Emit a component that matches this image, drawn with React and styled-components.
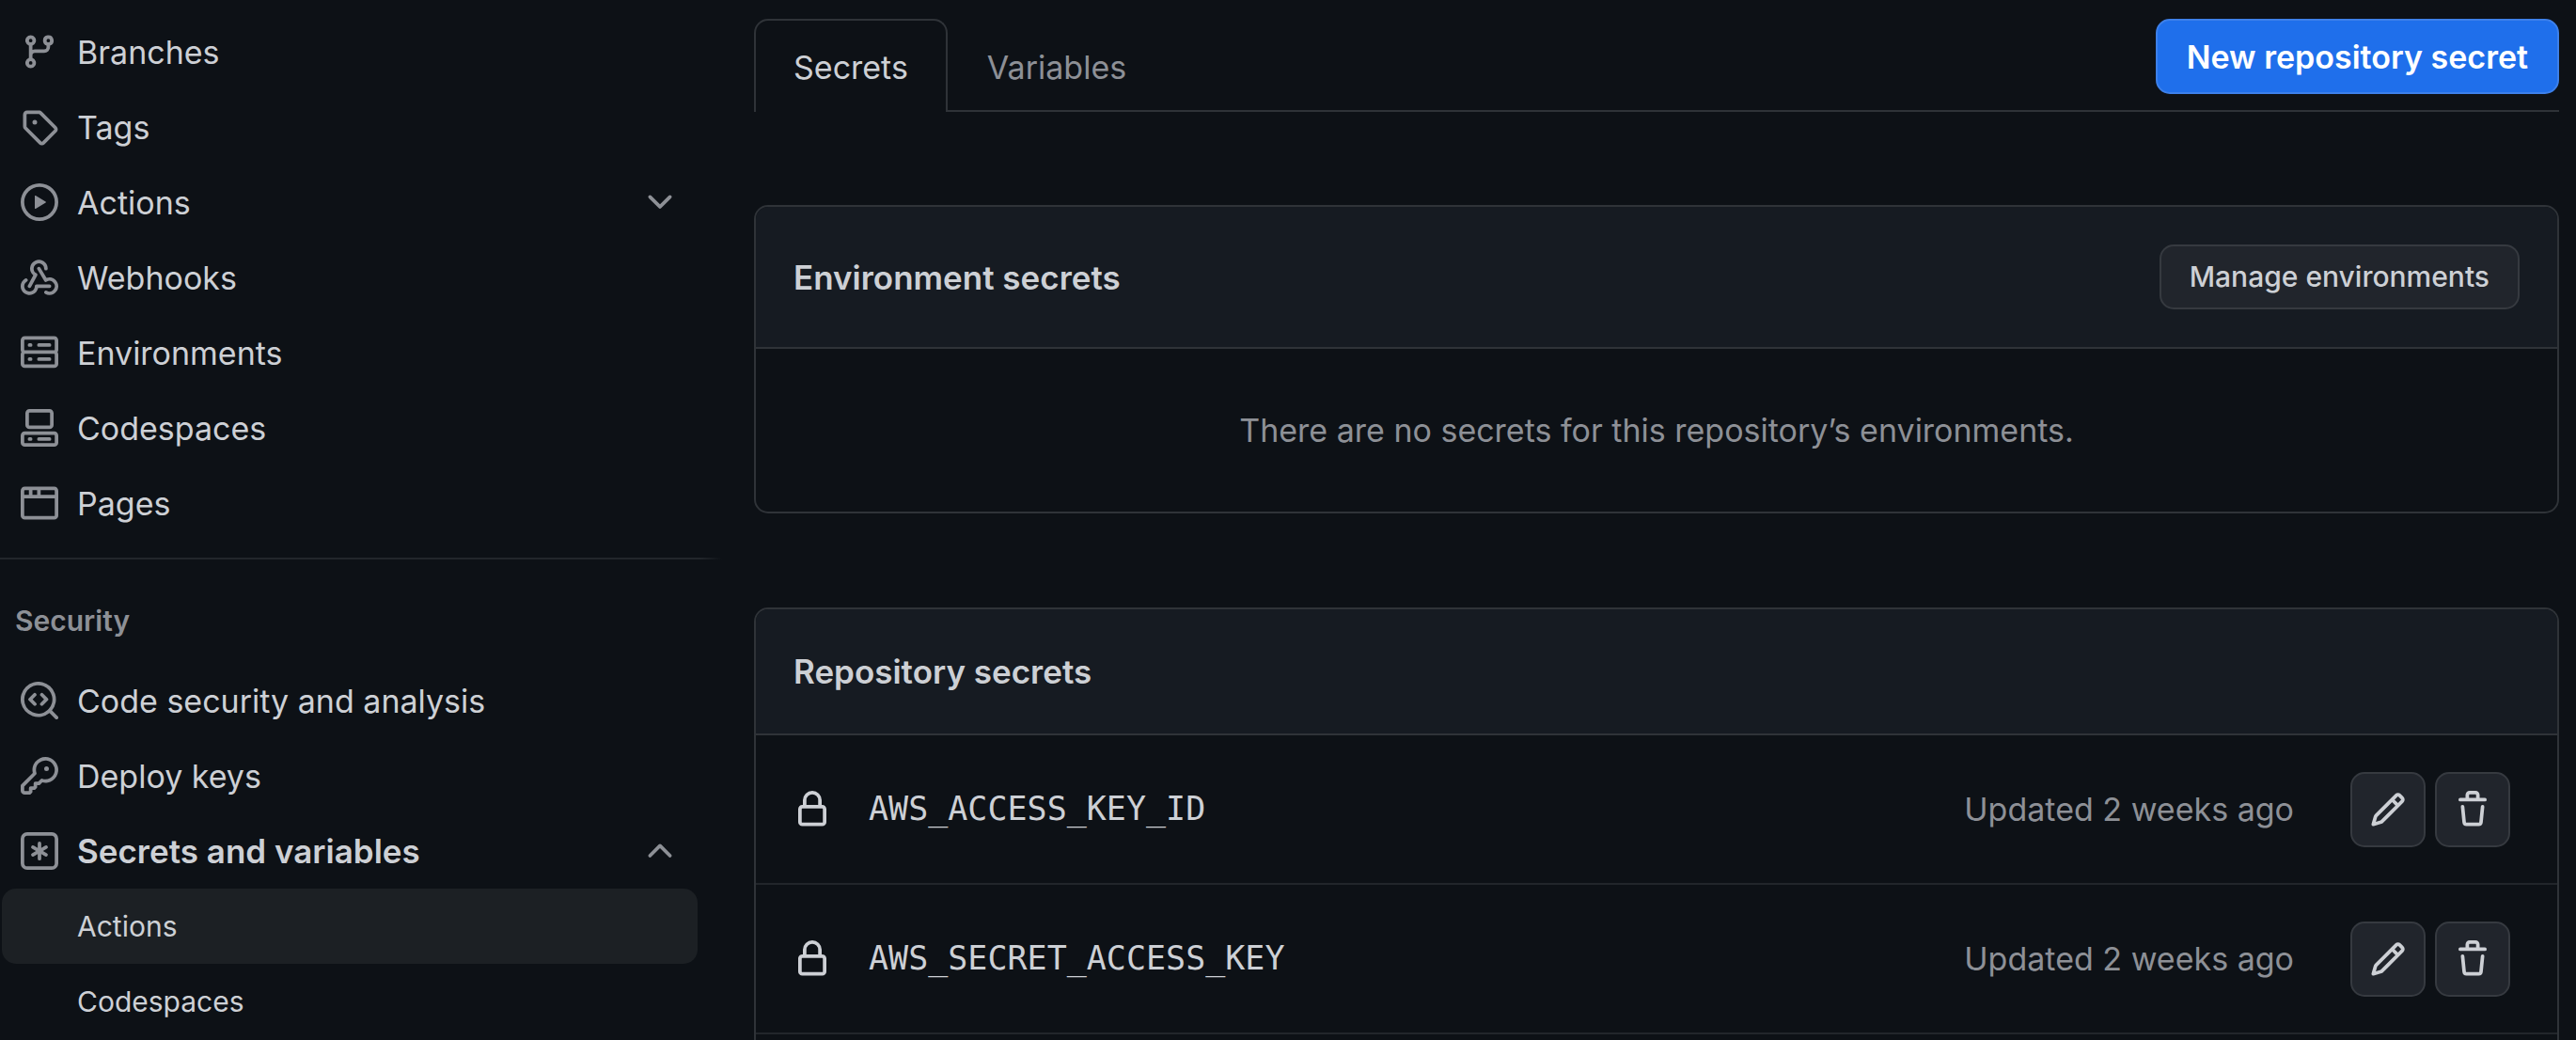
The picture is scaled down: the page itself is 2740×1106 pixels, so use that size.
import React from "react";
import styled, { createGlobalStyle } from "styled-components";

const color = {
  canvas: "#0d1116",
  header: "#161b22",
  text: "#cdd0d5",
  muted: "#8d9096",
  border: "#2f3338",
  rowBorder: "#22262b",
  button: "#21252c",
  buttonBorder: "#363a40",
  selected: "#1c2024",
  accent: "#1f6feb",
  accentBorder: "#3d80ea",
};

const GlobalStyle = createGlobalStyle`
  *, *::before, *::after { box-sizing: border-box; }
  body {
    margin: 0;
    background: ${color.canvas};
    color: ${color.text};
    font-family: Inter, "Liberation Sans", sans-serif;
    font-size: 34px;
    line-height: 47px;
  }
  button { font: inherit; color: inherit; cursor: pointer; }
  a { color: inherit; text-decoration: none; }
  ul { list-style: none; margin: 0; padding: 0; }
  h2, h3 { margin: 0; }
`;

const paths = {
  branch: "M9.5 3.25a2.25 2.25 0 1 1 3 2.122V6A2.5 2.5 0 0 1 10 8.5H6a1 1 0 0 0-1 1v1.128a2.251 2.251 0 1 1-1.5 0V5.372a2.25 2.25 0 1 1 1.5 0v1.836A2.493 2.493 0 0 1 6 7h4a1 1 0 0 0 1-1v-.628A2.25 2.25 0 0 1 9.5 3.25Zm-6 0a.75.75 0 1 0 1.5 0 .75.75 0 0 0-1.5 0Zm8.25-.75a.75.75 0 1 0 0 1.5.75.75 0 0 0 0-1.5ZM4.25 12a.75.75 0 1 0 0 1.5.75.75 0 0 0 0-1.5Z",
  tag: "M1 7.775V2.75C1 1.784 1.784 1 2.75 1h5.025c.464 0 .91.184 1.238.513l6.25 6.25a1.75 1.75 0 0 1 0 2.474l-5.026 5.026a1.75 1.75 0 0 1-2.474 0l-6.25-6.25A1.752 1.752 0 0 1 1 7.775Zm1.5 0c0 .066.026.13.073.177l6.25 6.25a.25.25 0 0 0 .354 0l5.025-5.025a.25.25 0 0 0 0-.354l-6.25-6.25a.25.25 0 0 0-.177-.073H2.75a.25.25 0 0 0-.25.25ZM6 5a1 1 0 1 1 0 2 1 1 0 0 1 0-2Z",
  play: "M8 0a8 8 0 1 1 0 16A8 8 0 0 1 8 0ZM1.5 8a6.5 6.5 0 1 0 13 0 6.5 6.5 0 0 0-13 0Zm4.879-2.773 4.264 2.559a.25.25 0 0 1 0 .428l-4.264 2.559A.25.25 0 0 1 6 10.559V5.442a.25.25 0 0 1 .379-.215Z",
  webhook: "M5.5 4.25a2.25 2.25 0 0 1 4.5 0 .75.75 0 0 0 1.5 0 3.75 3.75 0 1 0-6.14 2.889l-2.272 4.258a.75.75 0 0 0 1.324.706L7 7.25a.75.75 0 0 0-.309-1.015A2.25 2.25 0 0 1 5.5 4.25ZM7.364 3.607a.75.75 0 0 1 1.03.257l2.608 4.349a3.75 3.75 0 1 1-.628 6.785.75.75 0 0 1 .752-1.299 2.25 2.25 0 1 0-.033-3.88.75.75 0 0 1-1.03-.256L7.107 4.636a.75.75 0 0 1 .257-1.03ZM2.9 8.776A.75.75 0 0 1 2.625 9.8 2.25 2.25 0 1 0 6 11.75a.75.75 0 0 1 .75-.751h5.5a.75.75 0 0 1 0 1.5H7.425a3.751 3.751 0 1 1-5.55-3.998.75.75 0 0 1 1.024.274Z",
  server: "M1.75 1h12.5c.966 0 1.75.784 1.75 1.75v4c0 .372-.116.717-.314 1 .198.283.314.628.314 1v4a1.75 1.75 0 0 1-1.75 1.75H1.75A1.75 1.75 0 0 1 0 12.75v-4c0-.358.109-.707.314-1a1.739 1.739 0 0 1-.314-1v-4C0 1.784.784 1 1.75 1ZM1.5 2.75v4c0 .138.112.25.25.25h12.5a.25.25 0 0 0 .25-.25v-4a.25.25 0 0 0-.25-.25H1.75a.25.25 0 0 0-.25.25Zm.25 5.75a.25.25 0 0 0-.25.25v4c0 .138.112.25.25.25h12.5a.25.25 0 0 0 .25-.25v-4a.25.25 0 0 0-.25-.25ZM7 4.75A.75.75 0 0 1 7.75 4h4.5a.75.75 0 0 1 0 1.5h-4.5A.75.75 0 0 1 7 4.75ZM7.75 10h4.5a.75.75 0 0 1 0 1.5h-4.5a.75.75 0 0 1 0-1.5ZM3 4.75A.75.75 0 0 1 3.75 4h.5a.75.75 0 0 1 0 1.5h-.5A.75.75 0 0 1 3 4.75ZM3.75 10h.5a.75.75 0 0 1 0 1.5h-.5a.75.75 0 0 1 0-1.5Z",
  codespaces: "M0 11.25c0-.966.784-1.75 1.75-1.75h12.5c.966 0 1.75.784 1.75 1.75v3A1.75 1.75 0 0 1 14.25 16H1.75A1.75 1.75 0 0 1 0 14.25Zm2-9.5C2 .784 2.784 0 3.75 0h8.5C13.216 0 14 .784 14 1.75v5a1.75 1.75 0 0 1-1.75 1.75h-8.5A1.75 1.75 0 0 1 2 6.75Zm1.75-.25a.25.25 0 0 0-.25.25v5c0 .138.112.25.25.25h8.5a.25.25 0 0 0 .25-.25v-5a.25.25 0 0 0-.25-.25Zm-2 9.5a.25.25 0 0 0-.25.25v3c0 .138.112.25.25.25h12.5a.25.25 0 0 0 .25-.25v-3a.25.25 0 0 0-.25-.25ZM7 12.75a.75.75 0 0 1 .75-.75h4.5a.75.75 0 0 1 0 1.5h-4.5a.75.75 0 0 1-.75-.75Zm-4 0a.75.75 0 0 1 .75-.75h.5a.75.75 0 0 1 0 1.5h-.5a.75.75 0 0 1-.75-.75Z",
  browser: "M0 2.75C0 1.784.784 1 1.75 1h12.5c.966 0 1.75.784 1.75 1.75v10.5A1.75 1.75 0 0 1 14.25 15H1.75A1.75 1.75 0 0 1 0 13.25ZM14.5 6h-13v7.25c0 .138.112.25.25.25h12.5a.25.25 0 0 0 .25-.25Zm-6-3.5v2h6V2.75a.25.25 0 0 0-.25-.25ZM5 2.5v2h2v-2Zm-3.25 0a.25.25 0 0 0-.25.25V4.5h2v-2Z",
  codescan: "M8.47 4.97a.75.75 0 0 0 0 1.06L9.94 7.5 8.47 8.97a.75.75 0 1 0 1.06 1.06l2-2a.75.75 0 0 0 0-1.06l-2-2a.75.75 0 0 0-1.06 0ZM6.53 6.03a.75.75 0 0 0-1.06-1.06l-2 2a.75.75 0 0 0 0 1.06l2 2a.75.75 0 1 0 1.06-1.06L5.06 7.5l1.47-1.47ZM12.246 13.307a7.501 7.501 0 1 1 1.06-1.06l2.474 2.473a.749.749 0 1 1-1.06 1.06ZM1.5 7.5a6.002 6.002 0 0 0 3.608 5.504 6.002 6.002 0 0 0 6.486-1.117.748.748 0 0 1 .292-.293A6 6 0 1 0 1.5 7.5Z",
  key: "M10.5 0a5.499 5.499 0 1 1-1.288 10.848l-.932.932a.749.749 0 0 1-.53.22H7v.75a.749.749 0 0 1-.22.53l-.5.5a.749.749 0 0 1-.53.22H5v.75a.749.749 0 0 1-.22.53l-.5.5a.749.749 0 0 1-.53.22h-2A1.75 1.75 0 0 1 0 14.25v-2c0-.199.079-.389.22-.53l4.932-4.932A5.5 5.5 0 0 1 10.5 0Zm-4 5.5c-.001.431.069.86.205 1.269a.75.75 0 0 1-.181.768L1.5 12.56v1.69c0 .138.112.25.25.25h1.69l.06-.06v-1.19a.75.75 0 0 1 .75-.75h1.19l.06-.06v-1.19a.75.75 0 0 1 .75-.75h1.19l1.023-1.025a.75.75 0 0 1 .768-.18A4 4 0 1 0 6.5 5.5ZM11 6a1 1 0 1 1 0-2 1 1 0 0 1 0 2Z",
  asterisk: "M0 2.75A2.75 2.75 0 0 1 2.75 0h10.5A2.75 2.75 0 0 1 16 2.75v10.5A2.75 2.75 0 0 1 13.25 16H2.75A2.75 2.75 0 0 1 0 13.25ZM2.75 1.5c-.69 0-1.25.56-1.25 1.25v10.5c0 .69.56 1.25 1.25 1.25h10.5c.69 0 1.25-.56 1.25-1.25V2.75c0-.69-.56-1.25-1.25-1.25ZM8 4a.75.75 0 0 1 .75.75V6.7l1.69-.975a.75.75 0 0 1 .75 1.3L9.5 8l1.69.976a.75.75 0 0 1-.75 1.298L8.75 9.3v1.951a.75.75 0 0 1-1.5 0V9.299l-1.69.976a.75.75 0 0 1-.75-1.3L6.5 8l-1.69-.975a.75.75 0 0 1 .75-1.3l1.69.976V4.75A.75.75 0 0 1 8 4Z",
  chevronDown: "M12.78 5.22a.749.749 0 0 1 0 1.06l-4.25 4.25a.749.749 0 0 1-1.06 0L3.22 6.28a.749.749 0 1 1 1.06-1.06L8 8.939l3.72-3.719a.749.749 0 0 1 1.06 0Z",
  chevronUp: "M3.22 10.53a.749.749 0 0 1 0-1.06l4.25-4.25a.749.749 0 0 1 1.06 0l4.25 4.25a.749.749 0 1 1-1.06 1.06L8 6.811 4.28 10.53a.749.749 0 0 1-1.06 0Z",
  lock: "M4 4a4 4 0 0 1 8 0v2h.25c.966 0 1.75.784 1.75 1.75v5.5A1.75 1.75 0 0 1 12.25 15h-8.5A1.75 1.75 0 0 1 2 13.25v-5.5C2 6.784 2.784 6 3.75 6H4Zm8.25 3.5h-8.5a.25.25 0 0 0-.25.25v5.5c0 .138.112.25.25.25h8.5a.25.25 0 0 0 .25-.25v-5.5a.25.25 0 0 0-.25-.25ZM10.5 6V4a2.5 2.5 0 1 0-5 0v2Z",
  pencil: "M11.013 1.427a1.75 1.75 0 0 1 2.474 0l1.086 1.086a1.75 1.75 0 0 1 0 2.474l-8.61 8.61c-.21.21-.47.364-.756.445l-3.251.93a.75.75 0 0 1-.927-.928l.929-3.25c.081-.286.235-.547.445-.758l8.61-8.61Zm.176 4.823L9.75 4.81l-6.286 6.287a.253.253 0 0 0-.064.108l-.558 1.953 1.953-.558a.253.253 0 0 0 .108-.064Zm1.238-3.763a.25.25 0 0 0-.354 0L10.811 3.75l1.439 1.44 1.263-1.263a.25.25 0 0 0 0-.354Z",
  trash: "M11 1.75V3h2.25a.75.75 0 0 1 0 1.5H2.75a.75.75 0 0 1 0-1.5H5V1.75C5 .784 5.784 0 6.75 0h2.5C10.216 0 11 .784 11 1.75ZM4.496 6.675l.66 6.6a.25.25 0 0 0 .249.225h5.19a.25.25 0 0 0 .249-.225l.66-6.6a.75.75 0 0 1 1.492.149l-.66 6.6A1.748 1.748 0 0 1 10.595 15h-5.19a1.75 1.75 0 0 1-1.741-1.575l-.66-6.6a.75.75 0 1 1 1.492-.15ZM6.5 1.75V3h3V1.75a.25.25 0 0 0-.25-.25h-2.5a.25.25 0 0 0-.25.25Z",
};

const Svg = styled.svg`
  flex: none;
  display: block;
  width: 40px;
  height: 40px;
  fill: ${(p) => (p.$strong ? color.text : color.muted)};
`;

const Icon = ({ name, strong }) => (
  <Svg viewBox="0 0 16 16" aria-hidden="true" $strong={strong}>
    <path d={paths[name]} />
  </Svg>
);

const Page = styled.div`
  display: grid;
  grid-template-columns: 768px minmax(0, 1fr);
  column-gap: 34px;
  min-height: 100vh;
  padding-right: 18px;
`;

const Sidebar = styled.nav`
  padding-top: 15px;
`;

const NavList = styled.ul`
  padding: 0 26px 0 2px;
`;

const navItem = `
  display: flex;
  align-items: center;
  width: 100%;
  height: 80px;
  border: 0;
  border-radius: 15px;
`;

const NavLink = styled.a`
  ${navItem}
  gap: 20px;
  padding: 0 20px;
`;

const NavToggle = styled.button`
  ${navItem}
  gap: 20px;
  padding: 0 20px;
  background: none;
  text-align: left;
  font-size: ${(p) => (p.$open ? "35px" : "34px")};
  font-weight: ${(p) => (p.$open ? 600 : 400)};
`;

const SubLink = styled.a`
  ${navItem}
  padding: 0 20px 0 80px;
  font-size: 30px;
  background: ${(p) => (p.$selected ? color.selected : "transparent")};
`;

const Label = styled.span`
  flex: 1;
`;

const Divider = styled.hr`
  height: 2px;
  margin: 18px 0 42px;
  border: 0;
  background: linear-gradient(to right, ${color.rowBorder} 97%, transparent);
`;

const GroupTitle = styled.h3`
  margin-bottom: 21px;
  padding: 0 16px;
  color: ${color.muted};
  font-size: 30px;
  font-weight: 600;
`;

const Main = styled.main`
  display: flex;
  flex-direction: column;
  padding-top: 20px;
`;

const TabBar = styled.div`
  display: flex;
  align-items: flex-start;
  justify-content: space-between;
  margin-bottom: 99px;
  box-shadow: inset 0 -2px ${color.border};
`;

const Tabs = styled.div`
  display: flex;
`;

const Tab = styled.button`
  height: 99px;
  padding: 2px 40px 0;
  border: 2px solid ${(p) => (p.$active ? color.border : "transparent")};
  border-bottom: 0;
  border-radius: 15px 15px 0 0;
  background: ${(p) => (p.$active ? color.canvas : "transparent")};
  color: ${(p) => (p.$active ? color.text : color.muted)};
`;

const PrimaryButton = styled.button`
  height: 80px;
  padding: 0 31px;
  border: 2px solid ${color.accentBorder};
  border-radius: 15px;
  background: ${color.accent};
  color: #fff;
  font-weight: 600;
`;

const SecondaryButton = styled.button`
  height: 69px;
  padding: 0 30px;
  border: 2px solid ${color.buttonBorder};
  border-radius: 15px;
  background: ${color.button};
  font-size: 30px;
  font-weight: 500;
`;

const IconButton = styled.button`
  display: grid;
  place-items: center;
  width: 80px;
  height: 80px;
  padding: 0;
  border: 2px solid ${color.buttonBorder};
  border-radius: 15px;
  background: ${color.button};
`;

const Card = styled.section`
  overflow: hidden;
  border: 2px solid ${color.border};
  border-radius: 15px;
  margin-bottom: 100px;
`;

const OpenCard = styled(Card)`
  flex: 1;
  margin-bottom: 0;
  border-bottom: 0;
  border-radius: 15px 15px 0 0;
`;

const CardHeader = styled.header`
  display: flex;
  align-items: center;
  justify-content: space-between;
  padding: 40px;
  border-bottom: 2px solid ${color.border};
  background: ${color.header};
`;

const CardTitle = styled.h2`
  font-size: 35px;
  font-weight: 600;
  line-height: 52px;
`;

const EmptyText = styled.p`
  margin: 0;
  padding: 63px 40px;
  color: ${color.muted};
  text-align: center;
`;

const SecretRow = styled.li`
  display: flex;
  align-items: center;
  height: 159px;
  padding: 0 50px 0 40px;
  border-bottom: 2px solid ${color.rowBorder};
`;

const SecretName = styled.code`
  flex: 1;
  padding-left: 40px;
  font-family: "DejaVu Sans Mono", monospace;
  font-size: 35px;
`;

const Updated = styled.span`
  padding-right: 60px;
  color: ${color.muted};
`;

const Actions = styled.div`
  display: flex;
  gap: 10px;
`;

const general = [
  ["branch", "Branches"],
  ["tag", "Tags"],
  ["play", "Actions", true],
  ["webhook", "Webhooks"],
  ["server", "Environments"],
  ["codespaces", "Codespaces"],
  ["browser", "Pages"],
];

const security = [
  ["codescan", "Code security and analysis"],
  ["key", "Deploy keys"],
];

const secrets = ["AWS_ACCESS_KEY_ID", "AWS_SECRET_ACCESS_KEY"];

const NavEntry = ({ icon, label, expandable }) => (
  <li>
    {expandable ? (
      <NavToggle type="button" aria-expanded="false">
        <Icon name={icon} />
        <Label>{label}</Label>
        <Icon name="chevronDown" />
      </NavToggle>
    ) : (
      <NavLink href="#">
        <Icon name={icon} />
        <Label>{label}</Label>
      </NavLink>
    )}
  </li>
);

export default function App() {
  return (
    <>
      <GlobalStyle />
      <Page>
        <Sidebar aria-label="Settings">
          <NavList>
            {general.map(([icon, label, expandable]) => (
              <NavEntry key={label} icon={icon} label={label} expandable={expandable} />
            ))}
          </NavList>
          <Divider />
          <GroupTitle>Security</GroupTitle>
          <NavList>
            {security.map(([icon, label]) => (
              <NavEntry key={label} icon={icon} label={label} />
            ))}
            <li>
              <NavToggle type="button" aria-expanded="true" $open>
                <Icon name="asterisk" />
                <Label>Secrets and variables</Label>
                <Icon name="chevronUp" />
              </NavToggle>
              <ul>
                <li>
                  <SubLink href="#" aria-current="page" $selected>Actions</SubLink>
                </li>
                <li>
                  <SubLink href="#">Codespaces</SubLink>
                </li>
              </ul>
            </li>
          </NavList>
        </Sidebar>
        <Main>
          <TabBar>
            <Tabs role="tablist">
              <Tab type="button" role="tab" aria-selected="true" $active>Secrets</Tab>
              <Tab type="button" role="tab" aria-selected="false">Variables</Tab>
            </Tabs>
            <PrimaryButton type="button">New repository secret</PrimaryButton>
          </TabBar>
          <Card>
            <CardHeader>
              <CardTitle>Environment secrets</CardTitle>
              <SecondaryButton type="button">Manage environments</SecondaryButton>
            </CardHeader>
            <EmptyText>There are no secrets for this repository’s environments.</EmptyText>
          </Card>
          <OpenCard>
            <CardHeader>
              <CardTitle>Repository secrets</CardTitle>
            </CardHeader>
            <ul>
              {secrets.map((name) => (
                <SecretRow key={name}>
                  <Icon name="lock" strong />
                  <SecretName>{name}</SecretName>
                  <Updated>Updated 2 weeks ago</Updated>
                  <Actions>
                    <IconButton type="button" aria-label={`Edit ${name}`}>
                      <Icon name="pencil" strong />
                    </IconButton>
                    <IconButton type="button" aria-label={`Delete ${name}`}>
                      <Icon name="trash" strong />
                    </IconButton>
                  </Actions>
                </SecretRow>
              ))}
            </ul>
          </OpenCard>
        </Main>
      </Page>
    </>
  );
}
